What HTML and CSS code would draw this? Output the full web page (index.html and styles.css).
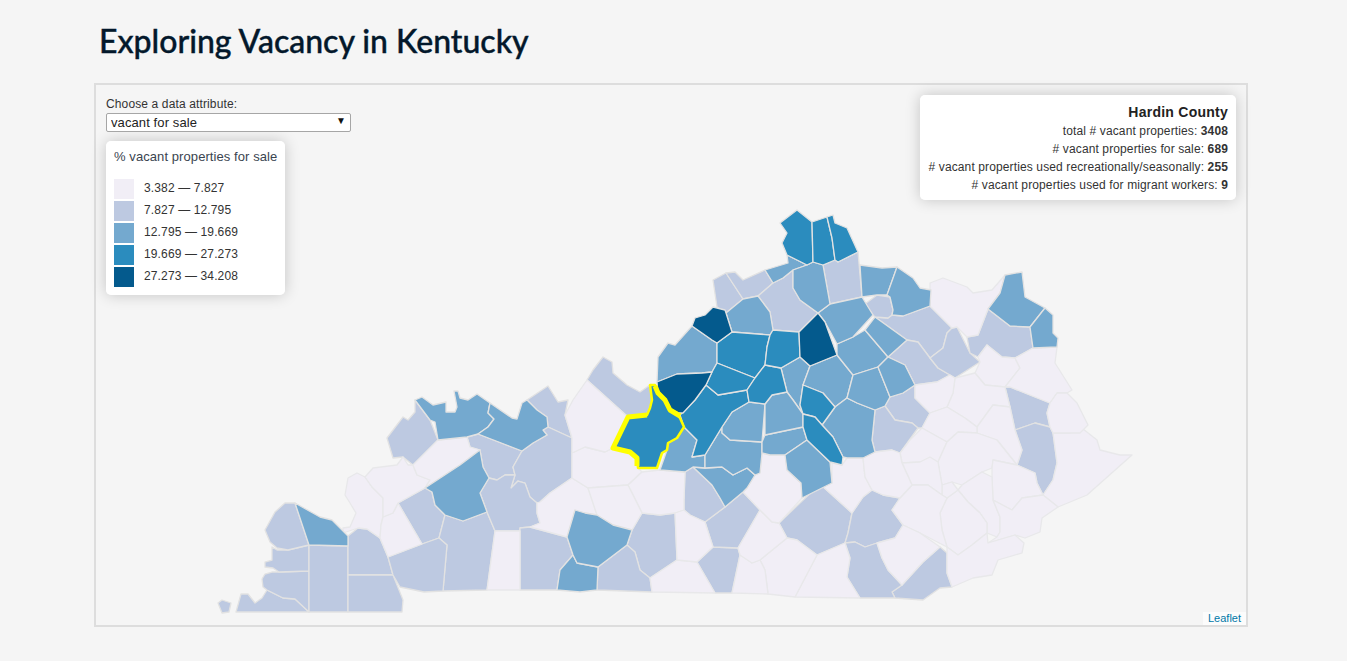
FILE: index.html
```html
<!DOCTYPE html>
<html>
<head>
    <title>Exploring Vacancy in Kentucky</title>
    <link rel="stylesheet" href="styles.css">
</head>
<body>
    <div class="container">
        <h1>Exploring Vacancy in Kentucky</h1>
        <div class="map">
            <!-- viewBox uses page pixels so the shapes can be read against the screenshot -->
            <svg class="counties" viewBox="96 85 1150 540">
                <g class="q1">
                    <polygon points="218,603 222,600 231,603 229,612 222,613"/>
                    <polygon points="236,612 241,594 248,594 255,603 262,598 267,590 283,598 295,599 309,612"/>
                    <polygon points="262,579 265,574 272,572 279,572 309,571 309,612 295,599 283,598 267,590 263,587"/>
                    <polygon points="272,547 277,550 288,550 309,545 309,571 279,572 273,568 265,567 265,562 272,560"/>
                    <polygon points="295,503 309,545 288,550 277,548 270,542 265,530 275,512 285,503"/>
                    <polygon points="309,545 348,546 348,612 309,612"/>
                    <polygon points="348,536 358,528 367,529 380,538 388,557 393,575 348,575"/>
                    <polygon points="348,575 393,575 403,600 402,612 348,612"/>
                    <polygon points="387,438 403,417 408,420 415,412 415,400 430,420 438,440 413,465 403,457 393,458"/>
                    <polygon points="527,400 548,386 558,402 568,400 565,415 572,438 548,427 547,417 537,410"/>
                    <polygon points="467,437 478,434 522,451 513,467 515,475 505,475 497,480 489,478 483,467 480,450 470,447"/>
                    <polygon points="522,451 533,443 547,435 543,430 548,427 572,438 572,478 550,493 540,502 537,503 530,497 525,483 518,481 511,488 515,475 513,467"/>
                    <polygon points="398,503 425,488 432,492 435,505 445,515 439,538 422,544"/>
                    <polygon points="445,515 463,521 487,512 495,531 487,590 443,591 447,545 439,538"/>
                    <polygon points="388,557 422,544 439,538 447,545 443,591 424,592 400,587 393,575"/>
                    <polygon points="480,493 489,478 497,480 505,475 515,475 511,488 518,481 525,483 530,497 537,503 537,513 540,523 530,527 520,528 520,531 495,531 487,512"/>
                    <polygon points="520,528 530,527 567,537 573,555 560,570 557,590 520,590"/>
                    <polygon points="587,380 593,370 603,357 612,362 613,373 627,385 640,392 650,385 652,400 650,408 647,415 628,417"/>
                    <polygon points="632,530 642,513 660,515 675,513 677,560 650,578 640,570 635,552 627,545"/>
                    <polygon points="597,590 598,567 627,545 635,552 640,570 650,578 652,592"/>
                    <polygon points="697,562 713,547 738,548 740,555 732,593 715,593"/>
                    <polygon points="705,522 725,507 743,492 760,510 738,548 713,547"/>
                    <polygon points="685,472 693,467 712,485 720,498 725,507 705,522 690,515 684,510 684,500"/>
                    <polygon points="779,523 820,484 852,513 848,533 845,543 817,555 797,540 787,538"/>
                    <polygon points="875,317 888,318 892,315 903,316 930,306 952,328 947,333 943,348 930,358 918,342 907,340"/>
                    <polygon points="888,357 907,340 918,342 930,358 938,368 950,375 937,382 915,385 905,365"/>
                    <polygon points="952,328 957,327 970,353 980,362 955,378 950,375 938,368 930,358 943,348 947,333"/>
                    <polygon points="967,337 978,335 988,309 1010,326 1030,327 1033,348 1015,358 1002,357 987,345 978,357 970,353"/>
                    <polygon points="1005,387 1010,387 1050,403 1047,413 1050,427 1035,423 1015,430 1010,407"/>
                    <polygon points="1015,430 1035,423 1050,427 1053,433 1057,463 1053,480 1043,495 1037,483 1035,473 1017,465 1022,450"/>
                    <polygon points="890,397 903,393 915,385 915,398 930,413 922,428 918,428 912,423 895,420 885,406"/>
                    <polygon points="875,410 885,406 895,420 912,423 918,428 900,453 892,450 875,452 872,440"/>
                    <polygon points="872,490 883,495 900,498 892,510 903,525 895,538 877,543 865,547 855,542 845,543 848,533 852,513 863,497"/>
                    <polygon points="902,585 923,562 940,547 947,553 947,573 952,587 940,588 923,600 895,598 892,592"/>
                    <polygon points="845,543 855,542 865,547 877,543 882,558 888,570 902,585 892,592 895,598 860,598 847,577 850,558"/>
                    <polygon points="713,280 726,273 743,299 726,313 717,307"/>
                    <polygon points="726,273 735,272 743,280 765,270 773,283 758,296 743,299"/>
                    <polygon points="758,296 773,283 783,278 793,270 793,288 800,300 818,313 799,332 773,330 770,312"/>
                    <polygon points="823,265 835,260 838,262 858,252 862,297 830,304"/>
                    <polygon points="865,304 877,295 890,297 893,310 892,315 888,318 875,317 873,315"/>
                </g>
                <g class="q0">
                    <polygon points="345,495 348,478 357,473 365,477 372,487 383,498 383,517 381,525 380,538 367,529 358,528 343,533 343,528 350,527 356,513 350,503"/>
                    <polygon points="381,525 383,517 393,513 398,503 422,544 388,557 380,538"/>
                    <polygon points="365,477 373,468 397,465 403,457 408,465 413,465 417,475 430,480 425,488 398,503 393,513 383,517 383,498 372,487"/>
                    <polygon points="438,440 467,437 470,447 480,450 460,465 425,488 430,480 417,475 413,465"/>
                    <polygon points="495,531 520,531 520,590 487,590"/>
                    <polygon points="530,527 540,523 537,513 537,503 540,502 550,493 572,478 588,488 597,515 585,513 575,510 567,537"/>
                    <polygon points="572,453 585,447 605,452 613,448 622,452 630,452 637,458 638,468 642,472 628,485 588,488 572,478"/>
                    <polygon points="565,415 573,400 587,380 628,417 613,448 605,452 585,447 572,453 572,438"/>
                    <polygon points="642,472 660,470 685,472 684,500 684,510 675,513 660,515 642,513 628,485"/>
                    <polygon points="588,488 628,485 642,513 632,530 613,525 597,515"/>
                    <polygon points="650,578 677,560 697,562 715,593 652,592"/>
                    <polygon points="675,513 684,510 690,515 705,522 713,547 697,562 677,560"/>
                    <polygon points="795,597 817,555 845,543 850,558 847,577 860,598"/>
                    <polygon points="760,560 787,538 797,540 817,555 795,597 768,594 765,570"/>
                    <polygon points="732,593 740,555 752,563 760,560 765,570 768,594"/>
                    <polygon points="738,548 760,510 772,522 779,523 787,538 760,560 752,563 740,555"/>
                    <polygon points="747,488 755,475 760,473 762,453 770,455 785,455 787,470 801,483 802,498 779,523 772,522 760,510 743,492"/>
                    <polygon points="820,484 832,483 832,463 842,465 847,458 863,458 865,477 872,490 863,497 852,513"/>
                    <polygon points="930,283 943,278 967,287 973,293 992,290 1005,275 1000,293 988,309 978,335 967,337 957,327 952,328 930,306"/>
                    <polygon points="978,357 987,345 1002,357 1015,358 1020,368 1005,387 985,385 975,373 980,362"/>
                    <polygon points="1015,358 1033,348 1057,347 1055,363 1072,390 1067,393 1057,393 1050,403 1010,387 1005,387 1020,368"/>
                    <polygon points="1053,433 1070,433 1078,425 1097,440 1100,450 1120,455 1132,455 1087,495 1058,507 1043,495 1053,480 1057,463"/>
                    <polygon points="1047,413 1050,403 1057,393 1067,393 1077,403 1088,425 1080,433 1053,433 1050,427"/>
                    <polygon points="955,378 975,373 985,385 1005,387 1010,407 993,405 977,427 965,418 947,407 953,393"/>
                    <polygon points="977,427 993,405 1010,407 1015,430 1022,450 1017,465 1005,450 997,440 977,433"/>
                    <polygon points="915,385 937,382 950,375 955,378 953,393 947,407 930,413 915,398"/>
                    <polygon points="930,413 947,407 965,418 977,427 977,433 958,432 947,442 922,428"/>
                    <polygon points="900,453 910,440 922,428 947,442 938,462 920,462 902,463"/>
                    <polygon points="938,462 947,442 958,432 977,433 997,440 1005,450 1017,465 993,460 992,468 982,472 962,485 952,482 942,485"/>
                    <polygon points="992,468 993,460 1017,465 1035,473 1037,483 1043,495 1022,498 1012,510 993,500 992,477"/>
                    <polygon points="962,485 982,472 992,477 993,500 1000,517 1000,532 997,537 987,533 987,523 980,513 968,502 958,490"/>
                    <polygon points="1000,517 993,500 1012,510 1022,498 1043,495 1058,507 1042,518 1040,532 1025,538 1015,535 988,543 997,537 1000,532"/>
                    <polygon points="947,498 958,490 968,502 980,513 987,523 987,533 972,545 958,555 947,547 942,530 940,513"/>
                    <polygon points="942,485 952,482 958,490 947,498 942,495"/>
                    <polygon points="902,463 920,462 930,457 938,462 942,485 942,495 928,485 912,485"/>
                    <polygon points="892,510 900,498 912,485 928,485 942,495 947,498 940,513 942,530 947,547 920,533 903,525"/>
                    <polygon points="863,458 875,452 892,450 900,453 902,463 912,485 900,498 883,495 872,490 865,477"/>
                    <polygon points="877,543 895,538 903,525 920,533 940,547 923,562 902,585 888,570 882,558"/>
                    <polygon points="947,553 947,547 958,555 972,545 987,533 988,543 1015,535 1024,543 1022,553 998,560 992,575 973,578 952,587 947,573"/>
                </g>
                <g class="q2">
                    <polygon points="295,503 320,517 332,520 348,536 348,546 309,545"/>
                    <polygon points="415,400 422,397 433,405 446,402 446,412 455,412 457,407 454,391 458,391 460,398 468,400 477,394 490,403 488,413 494,419 488,427 478,434 467,437 438,440 435,422 430,420"/>
                    <polygon points="490,403 512,418 517,419 522,403 527,400 537,410 547,417 548,427 543,430 547,435 533,443 522,451 478,434 488,427 494,419 488,413"/>
                    <polygon points="480,450 483,467 489,478 480,493 487,512 463,521 445,515 435,505 432,492 425,488 460,465"/>
                    <polygon points="573,555 577,563 598,567 597,590 580,592 557,590 560,570"/>
                    <polygon points="575,510 585,513 597,515 613,525 632,530 627,545 598,567 577,563 573,555 567,537"/>
                    <polygon points="657,382 658,357 668,343 675,345 692,326 712,340 717,343 717,363 712,372 702,373 677,374"/>
                    <polygon points="781,368 800,357 810,366 803,385 800,405 803,414 793,400 787,392"/>
                    <polygon points="810,366 837,355 853,375 847,398 835,407 823,393 808,387 803,385"/>
                    <polygon points="837,344 853,337 865,330 888,357 878,367 853,375 837,355"/>
                    <polygon points="818,313 830,304 862,297 873,315 853,337 837,344 825,322"/>
                    <polygon points="865,330 875,317 907,340 888,357"/>
                    <polygon points="860,265 882,268 897,267 887,295 877,295 862,297"/>
                    <polygon points="897,267 913,278 920,288 931,290 930,306 903,316 892,315 893,310 890,297 887,295"/>
                    <polygon points="1005,275 1022,272 1025,297 1045,308 1030,327 1010,326 988,309 1000,293"/>
                    <polygon points="1045,308 1053,315 1053,333 1058,338 1057,347 1033,348 1030,327"/>
                    <polygon points="693,467 705,468 722,467 733,475 747,468 755,475 747,488 743,492 725,507 720,498 712,485"/>
                    <polygon points="660,470 667,450 668,443 677,438 684,427 697,440 692,457 705,455 705,468 693,467 685,472"/>
                    <polygon points="705,455 722,427 722,433 730,440 762,442 762,453 760,473 755,475 747,468 733,475 722,467 705,468"/>
                    <polygon points="722,427 732,412 749,402 765,404 762,442 730,440 722,433"/>
                    <polygon points="762,442 765,435 803,427 807,440 785,455 770,455 762,453"/>
                    <polygon points="765,404 772,395 787,392 793,400 803,414 803,427 765,435"/>
                    <polygon points="785,455 807,440 830,462 832,483 802,498 801,483 787,470"/>
                    <polygon points="822,425 835,407 847,398 857,403 875,410 872,440 875,452 863,458 847,458 843,457 833,437"/>
                    <polygon points="847,398 853,375 878,367 890,397 885,406 875,410 857,403"/>
                    <polygon points="878,367 888,357 905,365 915,385 903,393 890,397"/>
                    <polygon points="726,313 743,299 758,296 770,312 773,330 770,335 732,332"/>
                    <polygon points="765,270 788,263 787,255 807,265 793,270 783,278 773,283"/>
                    <polygon points="793,270 807,265 813,262 823,265 830,304 818,313 800,300 793,288"/>
                </g>
                <g class="q3">
                    <polygon points="680,415 695,400 706,385 718,395 747,390 749,402 732,412 722,427 705,455 692,457 697,440 684,427"/>
                    <polygon points="717,343 732,332 770,335 767,347 765,365 755,378 717,363"/>
                    <polygon points="712,372 717,363 755,378 747,390 718,395 706,385"/>
                    <polygon points="747,390 755,378 765,365 781,368 787,392 772,395 765,404 749,402"/>
                    <polygon points="770,335 773,330 799,332 800,357 781,368 765,365 767,347"/>
                    <polygon points="803,385 808,387 823,393 835,407 822,425 815,417 803,414 800,405"/>
                    <polygon points="803,414 815,417 822,425 833,437 843,457 842,465 830,462 807,440 803,427"/>
                    <polygon points="780,223 797,210 812,222 813,262 807,265 787,255 782,243 787,233"/>
                    <polygon points="812,222 827,217 832,238 835,260 823,265 813,262"/>
                    <polygon points="827,217 833,215 835,223 847,228 858,252 838,262 835,260 832,238"/>
                </g>
                <g class="q4">
                    <polygon points="657,382 677,374 702,373 712,372 706,385 695,400 683,413 677,413 670,410 665,400 658,393"/>
                    <polygon points="692,326 695,318 705,315 713,307 725,310 726,313 732,332 717,343 712,340"/>
                    <polygon points="799,332 818,313 825,322 837,355 810,366 800,357"/>
                </g>
                <polygon class="hardin" points="650,385 655,385 658,393 665,400 670,410 677,413 680,418 684,427 677,438 668,443 667,450 662,453 657,468 638,468 637,458 630,452 613,448 628,417 647,415 650,408 652,400"/>
                <polyline class="hardin-thick" points="637,466 637,458 630,452 613,448 628,417 647,415"/>
                <polyline class="hardin-thick" points="655,386 658,393 665,400 670,410 680,416"/>
            </svg>
            <div class="controls">
                <label for="attr">Choose a data attribute:</label>
                <div class="select-box">
                    <select id="attr">
                        <option>vacant for sale</option>
                    </select>
                    <span class="arrow">&#9660;</span>
                </div>
                <div class="legend">
                    <h4>% vacant properties for sale</h4>
                    <div class="legend-row"><i class="sw0"></i>3.382 &mdash; 7.827</div>
                    <div class="legend-row"><i class="sw1"></i>7.827 &mdash; 12.795</div>
                    <div class="legend-row"><i class="sw2"></i>12.795 &mdash; 19.669</div>
                    <div class="legend-row"><i class="sw3"></i>19.669 &mdash; 27.273</div>
                    <div class="legend-row"><i class="sw4"></i>27.273 &mdash; 34.208</div>
                </div>
            </div>
            <div class="info">
                <h4>Hardin County</h4>
                <div>total # vacant properties: <b>3408</b></div>
                <div># vacant properties for sale: <b>689</b></div>
                <div># vacant properties used recreationally/seasonally: <b>255</b></div>
                <div># vacant properties used for migrant workers: <b>9</b></div>
            </div>
            <a class="attribution" href="#">Leaflet</a>
        </div>
    </div>
</body>
</html>
```

FILE: styles.css
```css
html, body {
    height: 661px;
    overflow: hidden;
}

body {
    font-family: "Liberation Sans", Arial, sans-serif;
    background-color: #f5f5f5;
    margin: 0;
}

.container {
    width: 1154px;
    margin-left: 94px;
}

h1 {
    font-family: Lato, sans-serif;
    font-size: 32px;
    font-weight: 500;
    line-height: 42px;
    color: #03182b;
    -webkit-text-stroke: 0.4px #03182b;
    margin: 0;
    padding: 20px 0 21px 5px;
}

.map {
    position: relative;
    height: 540px;
    border: 2px solid #dddddd;
}

.counties {
    display: block;
    width: 1150px;
    height: 540px;
}

.counties polygon {
    stroke: #e2e2e2;
    stroke-width: 1.3;
    stroke-linejoin: round;
}

.q0 polygon { fill: #f1eef6; stroke: #e8e8ea; }
.q1 polygon { fill: #bdc9e1; }
.q2 polygon { fill: #74a9cf; }
.q3 polygon { fill: #2b8cbe; }
.q4 polygon { fill: #045a8d; }

.counties .hardin {
    fill: #2b8cbe;
    stroke: #ffff00;
    stroke-width: 2.5;
}

.hardin-thick {
    fill: none;
    stroke: #ffff00;
    stroke-width: 5;
    stroke-linejoin: round;
}

.controls {
    position: absolute;
    left: 10px;
    top: 11px;
    width: 245px;
    font-size: 12px;
    color: #333333;
}

.controls label {
    display: block;
    height: 17px;
    line-height: 16px;
    letter-spacing: 0.13px;
}

.select-box {
    position: relative;
    height: 19px;
}

.select-box select {
    appearance: none;
    width: 245px;
    height: 19px;
    padding: 0 0 0 4px;
    border: 1px solid #a6a6a6;
    border-radius: 2px;
    background: #ffffff;
    font-family: "Liberation Sans", Arial, sans-serif;
    font-size: 13px;
    letter-spacing: 0.1px;
    color: #222222;
}

.arrow {
    position: absolute;
    right: 5px;
    top: 2px;
    font-size: 10px;
    color: #111111;
}

.legend {
    width: 179px;
    box-sizing: border-box;
    margin-top: 9px;
    padding: 8px;
    height: 154px;
    background: rgba(255, 255, 255, 0.95);
    border-radius: 5px;
    box-shadow: 0 0 15px rgba(0, 0, 0, 0.2);
}

.legend h4, .info h4 {
    margin: 0;
}

.legend h4 {
    font-size: 13px;
    font-weight: normal;
    letter-spacing: 0.08px;
    color: #3a4450;
    line-height: 16px;
    margin-bottom: 14px;
    white-space: nowrap;
}

.legend-row {
    display: flex;
    align-items: flex-start;
    gap: 10px;
    height: 20px;
    margin-bottom: 2px;
    line-height: 18px;
    letter-spacing: 0.13px;
}

.legend-row i {
    display: block;
    width: 20px;
    height: 20px;
}

.sw0 { background: #f1eef6; }
.sw1 { background: #bdc9e1; }
.sw2 { background: #74a9cf; }
.sw3 { background: #2b8cbe; }
.sw4 { background: #045a8d; }

.info {
    position: absolute;
    right: 10px;
    top: 10px;
    box-sizing: border-box;
    width: 316px;
    height: 105px;
    padding: 8px 8px;
    background: rgba(255, 255, 255, 0.95);
    border-radius: 5px;
    box-shadow: 0 0 15px rgba(0, 0, 0, 0.2);
    text-align: right;
    font-size: 12px;
    letter-spacing: 0.12px;
    line-height: 18px;
    color: #333333;
    white-space: nowrap;
}

.info h4 {
    font-size: 14px;
    letter-spacing: 0.25px;
    line-height: 19px;
    color: #222222;
}

.attribution {
    position: absolute;
    right: 0;
    bottom: 0;
    padding: 0 5px;
    background: rgba(255, 255, 255, 0.7);
    font-size: 11px;
    line-height: 13px;
    color: #0078a8;
    text-decoration: none;
}
```
